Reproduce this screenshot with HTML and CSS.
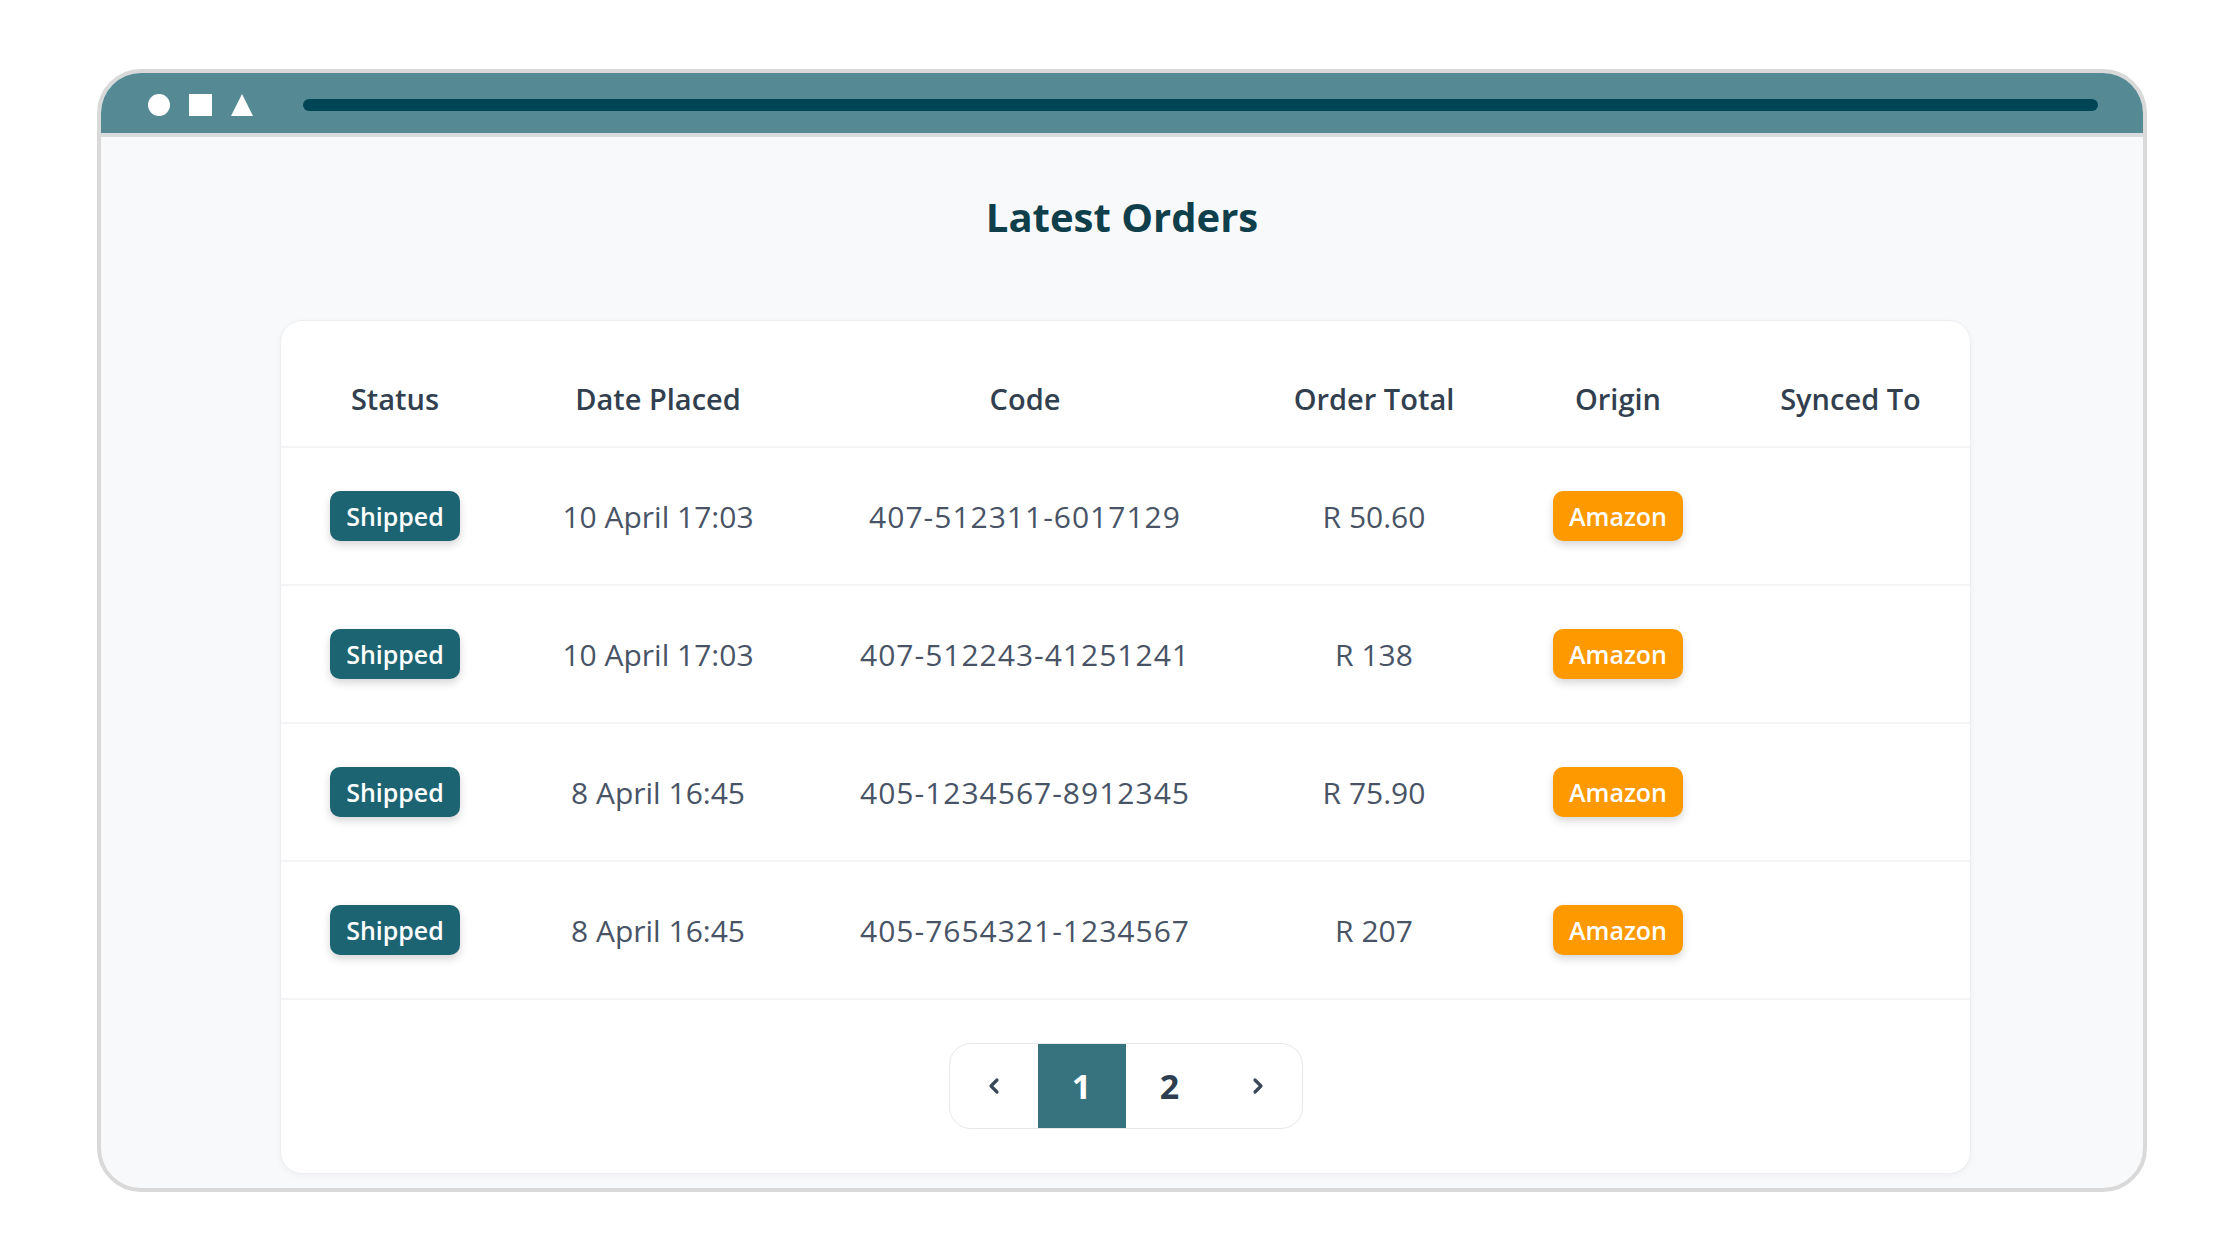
FILE: index.html
```html
<!DOCTYPE html>
<html lang="en">
<head>
<meta charset="utf-8">
<title>Latest Orders</title>
<link rel="stylesheet" href="styles.css">
</head>
<body>
<div class="window">
  <div class="titlebar">
    <span class="shape circle"></span>
    <span class="shape square"></span>
    <svg class="shape triangle" width="22" height="22" viewBox="0 0 22 22"><polygon points="11,0 22,22 0,22" fill="#ffffff"/></svg>
    <span class="address"></span>
  </div>
  <div class="content">
    <h1 class="title">Latest Orders</h1>
    <div class="card">
      <div class="row head">
        <div class="cell">Status</div>
        <div class="cell">Date Placed</div>
        <div class="cell">Code</div>
        <div class="cell">Order Total</div>
        <div class="cell">Origin</div>
        <div class="cell">Synced To</div>
      </div>
      <div class="row">
        <div class="cell"><span class="badge shipped">Shipped</span></div>
        <div class="cell">10 April 17:03</div>
        <div class="cell code">407-512311-6017129</div>
        <div class="cell">R 50.60</div>
        <div class="cell"><span class="badge amazon">Amazon</span></div>
        <div class="cell"></div>
      </div>
      <div class="row">
        <div class="cell"><span class="badge shipped">Shipped</span></div>
        <div class="cell">10 April 17:03</div>
        <div class="cell code">407-512243-41251241</div>
        <div class="cell">R 138</div>
        <div class="cell"><span class="badge amazon">Amazon</span></div>
        <div class="cell"></div>
      </div>
      <div class="row">
        <div class="cell"><span class="badge shipped">Shipped</span></div>
        <div class="cell">8 April 16:45</div>
        <div class="cell code">405-1234567-8912345</div>
        <div class="cell">R 75.90</div>
        <div class="cell"><span class="badge amazon">Amazon</span></div>
        <div class="cell"></div>
      </div>
      <div class="row">
        <div class="cell"><span class="badge shipped">Shipped</span></div>
        <div class="cell">8 April 16:45</div>
        <div class="cell code">405-7654321-1234567</div>
        <div class="cell">R 207</div>
        <div class="cell"><span class="badge amazon">Amazon</span></div>
        <div class="cell"></div>
      </div>
      <div class="pager">
        <div class="page-btn">
          <svg width="14" height="18" viewBox="0 0 14 18"><polyline points="10,3 4,9 10,15" fill="none" stroke="#3b4858" stroke-width="3.2" stroke-linecap="round" stroke-linejoin="round"/></svg>
        </div>
        <div class="page-btn active">1</div>
        <div class="page-btn">2</div>
        <div class="page-btn">
          <svg width="14" height="18" viewBox="0 0 14 18"><polyline points="4,3 10,9 4,15" fill="none" stroke="#3b4858" stroke-width="3.2" stroke-linecap="round" stroke-linejoin="round"/></svg>
        </div>
      </div>
    </div>
  </div>
</div>
</body>
</html>
```
FILE: styles.css
```css
* {
  box-sizing: border-box;
}

body {
  margin: 0;
  background: #ffffff;
  font-family: "Open Sans", "Noto Sans", sans-serif;
}

/* browser-like window frame */
.window {
  margin: 69px 0 0 97px;
  width: 2050px;
  height: 1123px;
  border: 4px solid #d9d9d9;
  border-radius: 44px;
  overflow: hidden;
  background: #f8f9fb;
}

.titlebar {
  height: 64px;
  padding: 4px 45px 0 47px;
  display: flex;
  align-items: center;
  background: #558a95;
  border-bottom: 4px solid #d9dcdd;
}

.shape {
  flex: none;
  display: block;
}

.circle {
  width: 22px;
  height: 22px;
  border-radius: 50%;
  background: #ffffff;
}

.square {
  width: 23px;
  height: 22px;
  margin-left: 19px;
  background: #ffffff;
}

.triangle {
  margin-left: 19px;
}

.address {
  flex: 1;
  height: 12px;
  margin-left: 50px;
  border-radius: 6px;
  background: #004556;
}

.content {
  padding-left: 179px;
}

.title {
  margin: 51px 0 75px -179px;
  height: 57px;
  line-height: 57px;
  text-align: center;
  font-size: 40px;
  font-weight: 700;
  color: #0f3f4b;
}

/* orders card */
.card {
  width: 1691px;
  height: 854px;
  background: #ffffff;
  border: 1px solid #eceef1;
  border-radius: 22px;
  box-shadow: 0 2px 6px rgba(20, 30, 50, 0.04);
}

.row {
  display: grid;
  grid-template-columns: 228px 298px 436px 262px 226px 1fr;
  align-items: center;
  height: 138px;
  border-bottom: 2px solid #f3f4f6;
  font-size: 30px;
  color: #485466;
}

.row.head {
  height: 127px;
  padding-top: 30px;
  font-size: 29px;
  font-weight: 600;
  color: #323f4f;
}

.cell {
  text-align: center;
  white-space: nowrap;
}

.code {
  letter-spacing: 1px;
}

.badge {
  display: inline-block;
  width: 130px;
  height: 50px;
  line-height: 50px;
  border-radius: 10px;
  font-size: 25px;
  font-weight: 600;
  letter-spacing: 0;
  color: #ffffff;
  box-shadow: 0 4px 9px rgba(0, 0, 0, 0.16);
  vertical-align: middle;
}

.shipped {
  background: #1d6473;
}

.amazon {
  background: #ff9900;
}

/* pagination */
.pager {
  display: flex;
  width: 354px;
  height: 86px;
  margin: 43px auto 0;
  border: 1px solid #e6e8eb;
  border-radius: 22px;
  overflow: hidden;
}

.page-btn {
  flex: 1;
  display: flex;
  align-items: center;
  justify-content: center;
  font-size: 34px;
  font-weight: 700;
  color: #2c3e50;
}

.page-btn.active {
  background: #36737f;
  color: #ffffff;
}
```
